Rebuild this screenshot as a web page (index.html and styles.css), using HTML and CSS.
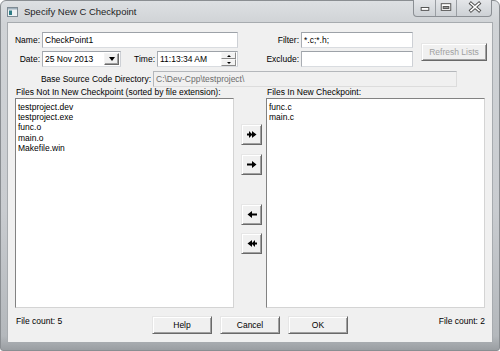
FILE: index.html
```html
<!DOCTYPE html>
<html>
<head>
<meta charset="utf-8">
<link rel="stylesheet" href="styles.css">
</head>
<body>
<div class="window">
  <div class="titlebar">
    <svg class="appicon" width="11" height="10" viewBox="0 0 11 10">
      <rect x="0.5" y="0.5" width="10" height="9" fill="#eef2f4" stroke="#7d8a93"/>
      <rect x="1" y="1" width="9" height="1.5" fill="#9fb0bc"/>
      <rect x="2" y="3.5" width="3" height="4.5" fill="#2f7d86"/>
    </svg>
    <span class="title">Specify New C Checkpoint</span>
    <div class="controls">
      <div class="ctl ctl-min">
        <svg width="22" height="17" viewBox="0 0 22 17"><rect x="7.5" y="8.5" width="8" height="3" fill="#fff" stroke="#505050"/></svg>
      </div>
      <div class="ctl ctl-max">
        <svg width="21" height="17" viewBox="0 0 21 17"><rect x="5.5" y="4.5" width="10" height="7" fill="#fff" stroke="#505050"/><rect x="7.5" y="7.5" width="6" height="2" fill="#9a9a9a" stroke="#505050"/></svg>
      </div>
      <div class="ctl ctl-close">
        <svg width="36" height="17" viewBox="0 0 36 17"><path d="M14 4.5 L22 11.5 M22 4.5 L14 11.5" stroke="#505050" stroke-width="3.4" stroke-linecap="square"/><path d="M14 4.5 L22 11.5 M22 4.5 L14 11.5" stroke="#fff" stroke-width="1.6" stroke-linecap="square"/></svg>
      </div>
    </div>
  </div>
  <div class="client">
    <div class="top">
      <div class="lab">Name:</div>
      <div class="field">CheckPoint1</div>
      <div class="lab">Filter:</div>
      <div class="field">*.c;*.h;</div>
      <div class="btn btn-refresh">Refresh Lists</div>

      <div class="lab">Date:</div>
      <div class="daterow">
        <div class="field datebox">
          <span class="datetext">25 Nov 2013</span>
          <span class="dropbtn"><span class="tri-down"></span></span>
        </div>
        <div class="lab timelab">Time:</div>
        <div class="field timebox">
          <span class="datetext">11:13:34 AM</span>
          <span class="spin">
            <span class="sp"><span class="tri-up"></span></span>
            <span class="sp"><span class="tri-dn"></span></span>
          </span>
        </div>
      </div>
      <div class="lab">Exclude:</div>
      <div class="field"></div>
    </div>

    <div class="baserow">
      <div class="baselab">Base Source Code Directory:</div>
      <div class="field basefield">C:\Dev-Cpp\testproject\</div>
    </div>

    <div class="lists">
      <div class="col">
        <div class="lbl">Files Not In New Checkpoint (sorted by file extension):</div>
        <div class="listbox">
          <div class="item">testproject.dev</div>
          <div class="item">testproject.exe</div>
          <div class="item">func.o</div>
          <div class="item">main.o</div>
          <div class="item">Makefile.win</div>
        </div>
      </div>
      <div class="movers">
        <div class="btn mv mv1">
          <svg width="10" height="7" viewBox="0 0 10 7"><path d="M0 2.5h2V0l3.5 3.5L2 7V4.5H0z M5 0l3.5 3.5L5 7z M5.5 0.5 L9.5 3.5 L5.5 6.5z" fill="#000"/></svg>
        </div>
        <div class="btn mv mv2">
          <svg width="10" height="7" viewBox="0 0 10 7"><path d="M0 2.5h5V0l4.5 3.5L5 7V4.5H0z" fill="#000"/></svg>
        </div>
        <div class="btn mv mv3">
          <svg width="10" height="7" viewBox="0 0 10 7"><path d="M10 2.5H5V0L0.5 3.5 5 7V4.5h5z" fill="#000"/></svg>
        </div>
        <div class="btn mv mv4">
          <svg width="10" height="7" viewBox="0 0 10 7"><path d="M10 2.5H8V0L4.5 3.5 8 7V4.5h2z M5 0L1.5 3.5 5 7z M4.5 0.5 L0.5 3.5 L4.5 6.5z" fill="#000"/></svg>
        </div>
      </div>
      <div class="col">
        <div class="lbl">Files In New Checkpoint:</div>
        <div class="listbox">
          <div class="item">func.c</div>
          <div class="item">main.c</div>
        </div>
      </div>
    </div>

    <div class="footer">
      <div class="fc fc-left">File count: 5</div>
      <div class="btn fbtn">Help</div>
      <div class="btn fbtn">Cancel</div>
      <div class="btn fbtn fbtn-last">OK</div>
      <div class="fc fc-right">File count: 2</div>
    </div>
  </div>
</div>
</body>
</html>
```

FILE: styles.css
```css
* { box-sizing: border-box; }
html, body { margin: 0; padding: 0; }
body {
  width: 500px;
  height: 351px;
  overflow: hidden;
  background: #ffffff;
  font-family: "Liberation Sans", Arial, sans-serif;
  font-size: 8.5px;
  color: #000;
}
.window {
  position: relative;
  width: 500px;
  height: 351px;
  border: 1px solid #8a8e92;
  border-radius: 6px 6px 3px 3px;
  background: linear-gradient(#dde0e3 0px, #d0d3d6 22px, #c9ccd0 60%, #b4b8bc 96%, #9a9ea2 100%);
  padding: 0 6px;
}
.titlebar {
  height: 21px;
  display: flex;
  align-items: center;
}
.appicon { display: block; margin-right: 6px; margin-top: 1px; }
.title {
  font-size: 9.5px;
  color: #1e1e1e;
  line-height: 12px;
}
.controls {
  position: absolute;
  top: -1px;
  left: 412px;
  width: 79px;
  height: 17px;
  display: flex;
  border: 1px solid #8b8f94;
  border-top: none;
  border-radius: 0 0 4px 4px;
  background: linear-gradient(#e4e6e9, #cdd1d5);
  overflow: hidden;
}
.ctl { height: 16px; display: flex; align-items: center; justify-content: center; }
.ctl svg { display: block; margin-top: -1px; }
.ctl-min { width: 22px; border-right: 1px solid #9a9ea3; }
.ctl-max { width: 21px; border-right: 1px solid #9a9ea3; }
.ctl-close { flex: 1; }

.client {
  height: 321px;
  background: #f0f0f0;
  border: 1px solid #a7abaf;
}

.top {
  display: grid;
  grid-template-columns: 34px 196px 63px 112px 74px;
  grid-template-rows: 16px 16px;
  row-gap: 3px;
  margin-top: 9px;
}
.lab {
  text-align: right;
  padding-right: 2px;
  line-height: 16px;
  white-space: nowrap;
}
.field {
  background: #fff;
  border: 1px solid;
  border-color: #9da2a8 #cdd0d5 #d9dce0 #a9adb3;
  height: 16px;
  padding-left: 2px;
  line-height: 14px;
  white-space: nowrap;
  overflow: hidden;
}
.btn {
  background: #f0f0f0;
  border: 1px solid;
  border-color: #e6e6e6 #696969 #696969 #e6e6e6;
  box-shadow: inset 1px 1px 0 #fff, inset -1px -1px 0 #a0a0a0;
  display: flex;
  align-items: center;
  justify-content: center;
  white-space: nowrap;
}
.btn-refresh {
  grid-column: 5;
  grid-row: 1 / span 2;
  justify-self: end;
  align-self: start;
  margin-top: 11px;
  width: 66px;
  height: 18px;
  color: #a0a0a0;
}
.daterow { display: flex; }
.datebox { width: 79px; display: flex; align-items: center; padding-right: 1px; }
.datetext { flex: 1; }
.dropbtn {
  width: 15px;
  height: 12px;
  background: #f0f0f0;
  border: 1px solid;
  border-color: #f4f4f4 #696969 #696969 #f4f4f4;
  box-shadow: inset -1px -1px 0 #a0a0a0;
  display: flex;
  align-items: center;
  justify-content: center;
}
.tri-down {
  width: 0; height: 0;
  border-left: 3.5px solid transparent;
  border-right: 3.5px solid transparent;
  border-top: 4px solid #000;
}
.timelab { flex: 1; }
.timebox { width: 81px; display: flex; align-items: stretch; padding-right: 1px; line-height: 14px; }
.spin {
  width: 15px;
  display: flex;
  flex-direction: column;
}
.sp {
  flex: 1;
  background: #f2f2f2;
  border: 1px solid;
  border-color: #f8f8f8 #8a8a8a #8a8a8a #f8f8f8;
  display: flex;
  align-items: center;
  justify-content: center;
}
.tri-up {
  width: 0; height: 0;
  border-left: 2px solid transparent;
  border-right: 2px solid transparent;
  border-bottom: 2px solid #000;
}
.tri-dn {
  width: 0; height: 0;
  border-left: 2px solid transparent;
  border-right: 2px solid transparent;
  border-top: 2px solid #000;
}

.baserow {
  display: flex;
  margin-top: 4px;
  height: 16px;
}
.baselab {
  width: 145px;
  text-align: right;
  padding-right: 2px;
  line-height: 16px;
  white-space: nowrap;
}
.basefield {
  width: 304px;
  background: #f0f0f0;
  color: #6d6d6d;
  border-color: #b4b7bb #dcdcdc #dcdcdc #b4b7bb;
}

.lists {
  display: flex;
  padding-left: 7px;
}
.col { width: 219px; }
.lbl {
  height: 11px;
  line-height: 10px;
  padding-left: 1px;
  white-space: nowrap;
}
.listbox {
  height: 210px;
  background: #fff;
  border: 1px solid;
  border-color: #828282 #d4d4d4 #d4d4d4 #828282;
  padding: 3px 2px 0 2px;
}
.item { line-height: 10.2px; white-space: nowrap; }

.movers {
  width: 32px;
  padding-left: 7px;
  padding-top: 37px;
  display: flex;
  flex-direction: column;
}
.mv { width: 21px; height: 21px; }
.mv svg { display: block; }
.mv2 { margin-top: 9px; }
.mv3 { margin-top: 29px; }
.mv4 { margin-top: 8px; }

.footer {
  display: flex;
  align-items: flex-start;
  margin-top: 8px;
  padding: 0 7px 0 8px;
}
.fc { line-height: 10px; white-space: nowrap; }
.fc-left { width: 136px; }
.fc-right { flex: 1; text-align: right; }
.fbtn { width: 60px; height: 18px; margin-right: 8px; }
.fbtn-last { margin-right: 0; }
```
